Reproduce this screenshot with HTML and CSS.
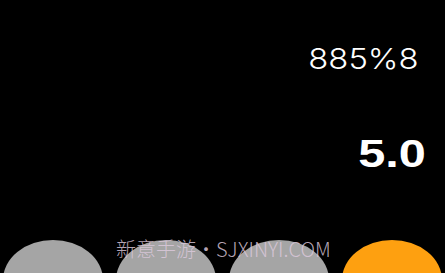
FILE: index.html
```html
<!DOCTYPE html>
<html lang="zh">
<head>
<meta charset="utf-8">
<title>Calculator</title>
<link rel="stylesheet" href="styles.css">
</head>
<body>
<div class="screen">
  <div class="display">
    <div class="expr">885%8</div>
    <div class="result">5.0</div>
  </div>
  <div class="keys">
    <div class="key key-gray"></div>
    <div class="key key-gray"></div>
    <div class="key key-gray"></div>
    <div class="key key-orange"></div>
  </div>
  <div class="watermark">新意手游<span class="wm-dot">•</span>SJXINYI.COM</div>
</div>
</body>
</html>
```

FILE: styles.css
```css
html, body {
  margin: 0;
  padding: 0;
  background: #000;
}
.screen {
  position: relative;
  width: 445px;
  height: 273px;
  overflow: hidden;
  background: #000;
}
.display {
  height: 240px;
  display: flex;
  flex-direction: column;
  align-items: flex-end;
}
.expr {
  margin-top: 44px;
  margin-right: 26px;
  font-family: "Inter", "Liberation Sans", sans-serif;
  font-weight: 300;
  font-size: 29px;
  line-height: 29px;
  color: #fff;
  transform: scaleX(1.13);
  transform-origin: right center;
}
.result {
  margin-top: 62px;
  margin-right: 19px;
  font-family: "Liberation Sans", Arial, sans-serif;
  font-weight: 700;
  font-size: 38px;
  line-height: 38px;
  color: #fff;
  transform: scaleX(1.28);
  transform-origin: right center;
}
.keys {
  display: flex;
  gap: 13px;
  padding-left: 3px;
}
.key {
  width: 100px;
  height: 80px;
  border-radius: 50%;
  flex: none;
}
.key-gray {
  background: #a5a5a5;
}
.key-orange {
  background: #fea010;
}
.watermark {
  position: absolute;
  left: 116px;
  top: 239px;
  font-family: "Noto Sans CJK SC", sans-serif;
  font-weight: 300;
  font-size: 20px;
  line-height: 20px;
  color: rgba(222, 202, 222, 0.82);
  white-space: nowrap;
}
.wm-dot {
  display: inline-block;
  width: 20px;
  text-align: center;
}
```
